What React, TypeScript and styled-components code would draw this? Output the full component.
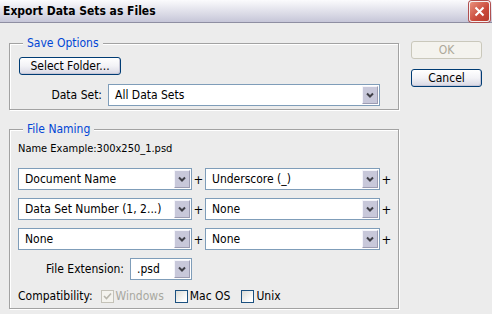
import React from 'react'
import styled, { createGlobalStyle } from 'styled-components'

const GlobalStyle = createGlobalStyle`
  html, body {
    margin: 0;
    padding: 0;
    background: #ececec;
  }
  body {
    font-family: "DejaVu Sans Condensed", "DejaVu Sans", sans-serif;
    font-size: 12px;
    color: #000;
  }
`

const Window = styled.div`
  width: 492px;
  height: 314px;
  background: #ececec;
  overflow: hidden;
`

const TitleBar = styled.div`
  height: 22px;
  border-bottom: 1px solid #8e8ea2;
  background: linear-gradient(#fbfbfd, #e6e6ee 40%, #c6c6d8);
  display: flex;
  align-items: center;
  justify-content: space-between;
  padding: 0 2px 0 3px;
`

const Title = styled.div`
  font-weight: bold;
  font-size: 12px;
`

const CloseButton = styled.div`
  width: 19px;
  height: 19px;
  border: 1px solid #f4f0f0;
  border-radius: 3px;
  background: linear-gradient(135deg, #e8907c, #c9493a 60%, #b83a2c);
  display: flex;
  align-items: center;
  justify-content: center;
  box-shadow: 0 0 0 1px #b05050;
`

const Body = styled.div`
  display: flex;
  padding-left: 9px;
`

const LeftColumn = styled.div`
  width: 390px;
`

const RightColumn = styled.div`
  margin-left: 12px;
  padding-top: 18px;
  display: flex;
  flex-direction: column;
  gap: 10px;
`

const Group = styled.div<{ $top: number }>`
  position: relative;
  margin-top: ${(p) => p.$top}px;
  border: 1px solid #a2a2a2;
  box-shadow: 1px 1px 0 #fff, inset 1px 1px 0 #fff;
`

const Legend = styled.span`
  position: absolute;
  top: -8px;
  left: 13px;
  padding: 0 4px;
  background: #ececec;
  color: #0046d5;
  font-size: 12px;
  line-height: 14px;
`

const SaveBody = styled.div`
  padding: 13px 19px 3px 9px;
  display: flex;
  flex-direction: column;
  gap: 9px;
`

const PushButton = styled.button<{ $width: number }>`
  width: ${(p) => p.$width}px;
  height: 18px;
  padding: 0;
  font-family: inherit;
  font-size: 12px;
  line-height: 14px;
  border: 1px solid #003c74;
  border-radius: 3px;
  background: linear-gradient(#ffffff, #f2f2f6 50%, #d8d8e4);
  box-shadow: inset -1px -1px 0 #c6c6d6;
  color: #000;

  &:disabled {
    border-color: #cac8bb;
    background: #f4f3ee;
    box-shadow: none;
    color: #aca899;
  }
`

const FieldRow = styled.div<{ $labelWidth: number }>`
  display: grid;
  grid-template-columns: ${(p) => p.$labelWidth}px auto;
  align-items: center;
  column-gap: 6px;
`

const FieldLabel = styled.span`
  text-align: right;
  white-space: nowrap;
`

const DropBox = styled.div<{ $width: number }>`
  box-sizing: border-box;
  width: ${(p) => p.$width}px;
  height: 22px;
  border: 1px solid #7f9db9;
  background: #fff;
  display: flex;
  align-items: stretch;
  padding: 1px;
`

const DropText = styled.span`
  flex: 1;
  padding-left: 5px;
  display: flex;
  align-items: center;
  white-space: nowrap;
  overflow: hidden;
`

const DropArrow = styled.span`
  width: 16px;
  box-sizing: border-box;
  border: 1px solid;
  border-color: #f4f4fa #9c9cb2 #9c9cb2 #f4f4fa;
  background: #c8c8da;
  display: flex;
  align-items: center;
  justify-content: center;
`

const Chevron = () => (
  <svg width="8" height="6" viewBox="0 0 8 6">
    <path d="M1 1.5 L4 4.5 L7 1.5" fill="none" stroke="#404048" strokeWidth="2" />
  </svg>
)

const Dropdown = ({ value, width }: { value: string; width: number }) => (
  <DropBox $width={width}>
    <DropText>{value}</DropText>
    <DropArrow>
      <Chevron />
    </DropArrow>
  </DropBox>
)

const NamingBody = styled.div`
  padding: 12px 0 0 8px;
  height: 178px;
  box-sizing: border-box;
`

const Example = styled.div`
  font-size: 11px;
  line-height: 14px;
  margin-bottom: 12px;
`

const PartRows = styled.div`
  display: flex;
  flex-direction: column;
  gap: 8px;
`

const PartRow = styled.div`
  display: flex;
  align-items: center;
`

const Plus = styled.span`
  width: 13px;
  text-align: center;
  font-size: 13px;
`

const ExtRow = styled.div`
  margin-top: 8px;
`

const CompatRow = styled.div`
  margin-top: 6px;
  display: flex;
  align-items: center;
  height: 20px;
`

const CompatLabel = styled.span<{ $muted?: boolean }>`
  color: ${(p) => (p.$muted ? '#a8a8a0' : '#000')};
`

const Check = styled.span<{ $disabled?: boolean }>`
  box-sizing: border-box;
  width: 13px;
  height: 13px;
  margin: 0 2px 0 ${(p) => (p.$disabled ? 8 : 11)}px;
  border: 1px solid ${(p) => (p.$disabled ? '#c4c2b8' : '#1c5180')};
  background: ${(p) =>
    p.$disabled ? '#f4f3ee' : 'linear-gradient(135deg, #dcdcd6, #fff 80%)'};
  display: inline-flex;
  align-items: center;
  justify-content: center;
`

const CheckMark = () => (
  <svg width="9" height="9" viewBox="0 0 9 9">
    <path d="M1 4 L3.5 6.5 L8 1.5" fill="none" stroke="#b8b6ac" strokeWidth="1.6" />
  </svg>
)

const parts: [string, string][] = [
  ['Document Name', 'Underscore (_)'],
  ['Data Set Number (1, 2...)', 'None'],
  ['None', 'None'],
]

const App = () => (
  <Window>
    <GlobalStyle />
    <TitleBar>
      <Title>Export Data Sets as Files</Title>
      <CloseButton>
        <svg width="11" height="11" viewBox="0 0 11 11">
          <path d="M1.5 1.5 L9.5 9.5 M9.5 1.5 L1.5 9.5" stroke="#fff" strokeWidth="2" />
        </svg>
      </CloseButton>
    </TitleBar>
    <Body>
      <LeftColumn>
        <Group $top={20}>
          <Legend>Save Options</Legend>
          <SaveBody>
            <PushButton $width={102}>Select Folder...</PushButton>
            <FieldRow $labelWidth={83}>
              <FieldLabel>Data Set:</FieldLabel>
              <Dropdown value="All Data Sets" width={272} />
            </FieldRow>
          </SaveBody>
        </Group>
        <Group $top={19}>
          <Legend>File Naming</Legend>
          <NamingBody>
            <Example>Name Example:300x250_1.psd</Example>
            <PartRows>
              {parts.map(([a, b], i) => (
                <PartRow key={i}>
                  <Dropdown value={a} width={174} />
                  <Plus>+</Plus>
                  <Dropdown value={b} width={175} />
                  <Plus>+</Plus>
                </PartRow>
              ))}
            </PartRows>
            <ExtRow>
              <FieldRow $labelWidth={106}>
                <FieldLabel>File Extension:</FieldLabel>
                <Dropdown value=".psd" width={62} />
              </FieldRow>
            </ExtRow>
            <CompatRow>
              <CompatLabel>Compatibility:</CompatLabel>
              <Check $disabled>
                <CheckMark />
              </Check>
              <CompatLabel $muted>Windows</CompatLabel>
              <Check />
              <CompatLabel>Mac OS</CompatLabel>
              <Check />
              <CompatLabel>Unix</CompatLabel>
            </CompatRow>
          </NamingBody>
        </Group>
      </LeftColumn>
      <RightColumn>
        <PushButton $width={71} disabled>
          OK
        </PushButton>
        <PushButton $width={71}>Cancel</PushButton>
      </RightColumn>
    </Body>
  </Window>
)

export default App
